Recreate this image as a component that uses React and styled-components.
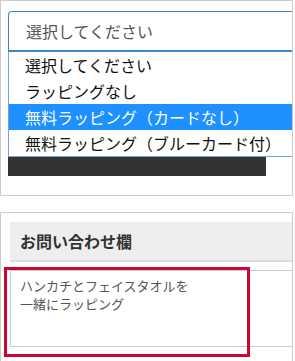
import React from "react";
import styled, { createGlobalStyle } from "styled-components";

const Global = createGlobalStyle`
  html, body { margin: 0; padding: 0; background: #fff; }
  body { font-family: "Noto Sans CJK JP", "Noto Sans", sans-serif; }
  * { box-sizing: border-box; }
`;

const Page = styled.div`
  width: 293px;
  display: flex;
  flex-direction: column;
  gap: 16px;
`;

const Panel = styled.section`
  position: relative;
  border: 1px solid #cccccc;
  overflow: hidden;
  padding: ${(p) => p.$pad};
  height: ${(p) => p.$h};
`;

const SelectWrap = styled.div`
  position: relative;
  width: 320px;
`;

const SelectBox = styled.div`
  height: 41px;
  border: 1px solid #3f86c4;
  border-bottom-width: 2px;
  border-radius: 4px 0 0 0;
  padding-left: 17px;
  display: flex;
  align-items: center;
  font-size: 16px;
  color: #555;
`;

const Options = styled.ul`
  position: absolute;
  left: 0;
  top: 41px;
  width: 100%;
  margin: 0;
  padding: 0;
  list-style: none;
  border: 1px solid #7d9fd6;
  border-top: none;
  background: #fff;
  z-index: 2;
`;

const Option = styled.li`
  height: 26px;
  line-height: 26px;
  padding-left: 16px;
  font-size: 16px;
  color: ${(p) => (p.$active ? "#fff" : "#111")};
  background: ${(p) => (p.$active ? "#1e90ff" : "#fff")};
  white-space: nowrap;
`;

const CartBar = styled.div`
  margin-top: 78px;
  width: 258px;
  height: 46px;
  background: #333333;
`;

const Header = styled.div`
  width: 300px;
  height: 40px;
  background: #eeeeee;
  border-bottom: 2px solid #dcdcdc;
  display: flex;
  align-items: center;
  padding-left: 10px;
  font-size: 16px;
  font-weight: 700;
  color: #333;
`;

const Message = styled.div`
  margin-top: 8px;
  width: 300px;
  height: 77px;
  border: 1px solid #c6ccd0;
  padding: 6px 9px;
  font-size: 13px;
  line-height: 18px;
  color: #555;
`;

const Highlight = styled.div`
  position: absolute;
  left: 3px;
  top: 54px;
  width: 246px;
  height: 90px;
  border: 3px solid #cc0538;
  pointer-events: none;
`;

export default function App() {
  const options = [
    "選択してください",
    "ラッピングなし",
    "無料ラッピング（カードなし）",
    "無料ラッピング（ブルーカード付）",
  ];
  return (
    <>
      <Global />
      <Page>
        <Panel $pad="10px 0 19px 7px" $h="196px">
          <SelectWrap>
            <SelectBox>選択してください</SelectBox>
            <Options>
              {options.map((o, i) => (
                <Option key={o} $active={i === 2}>
                  {o}
                </Option>
              ))}
            </Options>
          </SelectWrap>
          <CartBar />
        </Panel>
        <Panel $pad="9px 0 0 9px" $h="160px">
          <Header>お問い合わせ欄</Header>
          <Message>
            ハンカチとフェイスタオルを
            <br />
            一緒にラッピング
          </Message>
          <Highlight />
        </Panel>
      </Page>
    </>
  );
}
